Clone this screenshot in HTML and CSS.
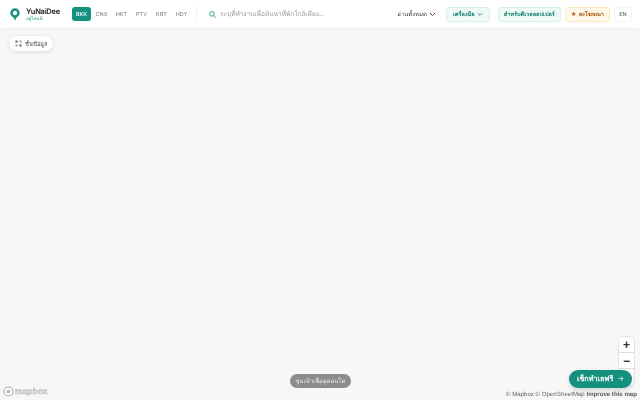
FILE: index.html
```html
<!DOCTYPE html>
<html lang="th">
<head>
    <meta charset="UTF-8">
    <title>YuNaiDee</title>
    <link rel="stylesheet" href="styles.css">
</head>
<body>
    <header class="topbar">
        <div class="brand">
            <svg class="brand-pin" width="10" height="13" viewBox="0 0 10 13">
                <path d="M5 .3a4.700 4.700 0 0 0-4.700 4.700c0 2.300 1.700 3.800 3.300 4.500L5 12.800l1.400-3.300C8 8.800 9.700 7.300 9.700 5A4.700 4.700 0 0 0 5 .3z" fill="#14907f"/>
                <circle cx="5" cy="5" r="2.200" fill="#fff"/>
            </svg>
            <div class="brand-text">
                <div class="brand-name">YuNaiDee</div>
                <div class="brand-sub">อยู่ไหนดี</div>
            </div>
        </div>
        <nav class="cities">
            <a class="city active">BKK</a>
            <a class="city">CNX</a>
            <a class="city">HKT</a>
            <a class="city">PTV</a>
            <a class="city">KRT</a>
            <a class="city">HDY</a>
        </nav>
        <div class="search">
            <svg width="7" height="7" viewBox="0 0 8 8" fill="none" stroke="#2a9d8f" stroke-width="1.100">
                <circle cx="3.300" cy="3.300" r="2.600"/>
                <path d="M5.300 5.300L7.600 7.600"/>
            </svg>
            <span>ระบุที่ทำงานเพื่อค้นหาที่พักใกล้เคียง...</span>
        </div>
        <div class="actions">
            <a class="read-all">อ่านทั้งหมด
                <svg width="7" height="5" viewBox="0 0 7 5" fill="none" stroke="#444" stroke-width="1"><path d="M1 1l2.500 2.500L6 1"/></svg>
            </a>
            <a class="pill pill-green tools">เครื่องมือ
                <svg width="6" height="5" viewBox="0 0 7 5" fill="none" stroke="#14806f" stroke-width="1"><path d="M1 1l2.500 2.500L6 1"/></svg>
            </a>
            <a class="pill pill-green dev">สำหรับดีเวลลอปเปอร์</a>
            <a class="pill pill-amber"><span class="star">★</span> ลงโฆษณา</a>
            <a class="lang">EN</a>
        </div>
    </header>

    <button class="layers">
        <svg width="7" height="7" viewBox="0 0 8 8" fill="#777">
            <rect x="0.500" y="0.500" width="2.500" height="2.500"/>
            <rect x="5" y="0.500" width="2.500" height="2.500" fill="#aaa"/>
            <rect x="0.500" y="5" width="2.500" height="2.500" fill="#aaa"/>
            <rect x="5" y="5" width="2.500" height="2.500"/>
        </svg>
        ชั้นข้อมูล
    </button>

    <div class="zoom-ctrl">
        <button>+</button>
        <button>−</button>
        <button></button>
    </div>

    <div class="mapbox-logo">
        <svg width="11" height="11" viewBox="0 0 11 11">
            <circle cx="5.500" cy="5.500" r="4.500" fill="#fff" stroke="#aaa" stroke-width="1.100"/>
            <circle cx="5.500" cy="5.500" r="2" fill="#bbb"/>
        </svg>
        <span>mapbox</span>
    </div>

    <div class="zoom-hint">ซูมเข้าเพื่อดูคอนโด</div>
    <a class="cta">เช็กทำเลฟรี <span class="cta-arrow">→</span></a>
    <div class="attrib">© Mapbox © OpenStreetMap <b>Improve this map</b></div>
</body>
</html>
```

FILE: styles.css
```css
html, body {
    height: 100%;
}
body {
    margin: 0;
    background-color: #f7f7f7;
    font-family: "Noto Sans", "Inter", sans-serif;
    text-rendering: geometricPrecision;
    overflow: hidden;
    position: relative;
}
a {
    text-decoration: none;
}
.topbar, .layers, .zoom-hint, .cta, .attrib, .mapbox-logo {
    will-change: transform;
}
.topbar {
    display: flex;
    align-items: center;
    height: 28px;
    padding: 0 8px 0 10px;
    box-sizing: border-box;
    background-color: white;
    box-shadow: 0 1px 3px rgba(0, 0, 0, 0.04);
}
.brand {
    display: flex;
    align-items: center;
    gap: 6px;
    width: 62px;
}
.brand-name {
    font: 600 7.500px/9px "Inter", sans-serif;
    letter-spacing: -0.25px;
    color: #222;
}
.brand-sub {
    font-size: 4.500px;
    line-height: 6px;
    color: #14907f;
}
.cities {
    display: flex;
    align-items: center;
    gap: 1px;
}
.city {
    width: 19px;
    height: 14px;
    text-align: center;
    font: 400 5.500px/16px "Inter", sans-serif;
    color: #777;
}
.city.active {
    background-color: #14907f;
    border-radius: 3px;
    color: white;
    font-weight: 500;
}
.search {
    display: flex;
    align-items: center;
    gap: 4px;
    margin-left: 5px;
    padding-left: 12px;
    border-left: 1px solid #f1f1f1;
    font-size: 6.500px;
    color: #999;
    flex: 1;
    height: 14px;
}
.actions {
    display: flex;
    align-items: center;
    gap: 4px;
}
.read-all {
    display: flex;
    align-items: center;
    gap: 2px;
    margin-right: 6px;
    font-size: 6px;
    font-weight: 500;
    color: #333;
}
.pill {
    display: flex;
    align-items: center;
    gap: 2px;
    height: 15px;
    padding: 0 5px;
    box-sizing: border-box;
    font-size: 5.600px;
    font-weight: 600;
    border-radius: 3px;
}
.pill-green {
    background-color: #effaf7;
    border: 1px solid #d5f0ea;
    color: #14806f;
}
.tools {
    margin-right: 4px;
    padding: 0 6px;
}
.pill-amber {
    background-color: #fff8e8;
    border: 1px solid #fbe9c0;
    color: #a85a10;
}
.star {
    color: #b4541a;
}
.lang {
    width: 18px;
    height: 15px;
    box-sizing: border-box;
    border: 1px solid #f4f4f4;
    border-radius: 3px;
    font: 400 5.500px/15px "Inter", sans-serif;
    text-align: center;
    color: #555;
}
.layers {
    position: absolute;
    top: 36px;
    left: 9px;
    display: flex;
    align-items: center;
    gap: 3px;
    height: 15px;
    padding: 0 6px;
    border: none;
    border-radius: 8px;
    background-color: white;
    box-shadow: 0 1px 4px rgba(0, 0, 0, 0.12);
    font-family: inherit;
    font-size: 5.700px;
    color: #444;
}
.zoom-ctrl {
    position: absolute;
    top: 337px;
    left: 619px;
    width: 15px;
    display: flex;
    flex-direction: column;
    background-color: white;
    border-radius: 4px;
    box-shadow: 0 0 0 1px rgba(0, 0, 0, 0.08);
}
.zoom-ctrl button {
    height: 16px;
    padding: 0;
    border: none;
    border-bottom: 1px solid #ddd;
    background: none;
    font: 700 12px/14px "Liberation Sans", sans-serif;
    color: #333;
}
.zoom-ctrl button:last-child {
    border-bottom: none;
}
.mapbox-logo {
    position: absolute;
    left: 3px;
    top: 386px;
    display: flex;
    align-items: center;
    gap: 1px;
    font: 700 8.500px/11px "Liberation Sans", sans-serif;
    color: #d4d4d4;
    -webkit-text-stroke: 0.3px #aaa;
}
.zoom-hint {
    position: absolute;
    left: 290px;
    top: 374px;
    width: 61px;
    height: 14px;
    border-radius: 7px;
    background-color: #8c8c8c;
    color: #eee;
    font-size: 6px;
    line-height: 14px;
    text-align: center;
}
.cta {
    position: absolute;
    left: 569px;
    top: 370px;
    width: 63px;
    height: 18px;
    border-radius: 9px;
    background-color: #14907f;
    color: white;
    font-size: 7.200px;
    font-weight: 600;
    line-height: 18px;
    text-align: center;
    box-shadow: 0 2px 5px rgba(0, 0, 0, 0.15);
}
.cta-arrow {
    margin-left: 2px;
    font-weight: 400;
}
.attrib {
    position: absolute;
    right: 3px;
    top: 390px;
    font: 6.100px/10px "Liberation Sans", sans-serif;
    color: #666;
}
.attrib b {
    color: #555;
}
```
